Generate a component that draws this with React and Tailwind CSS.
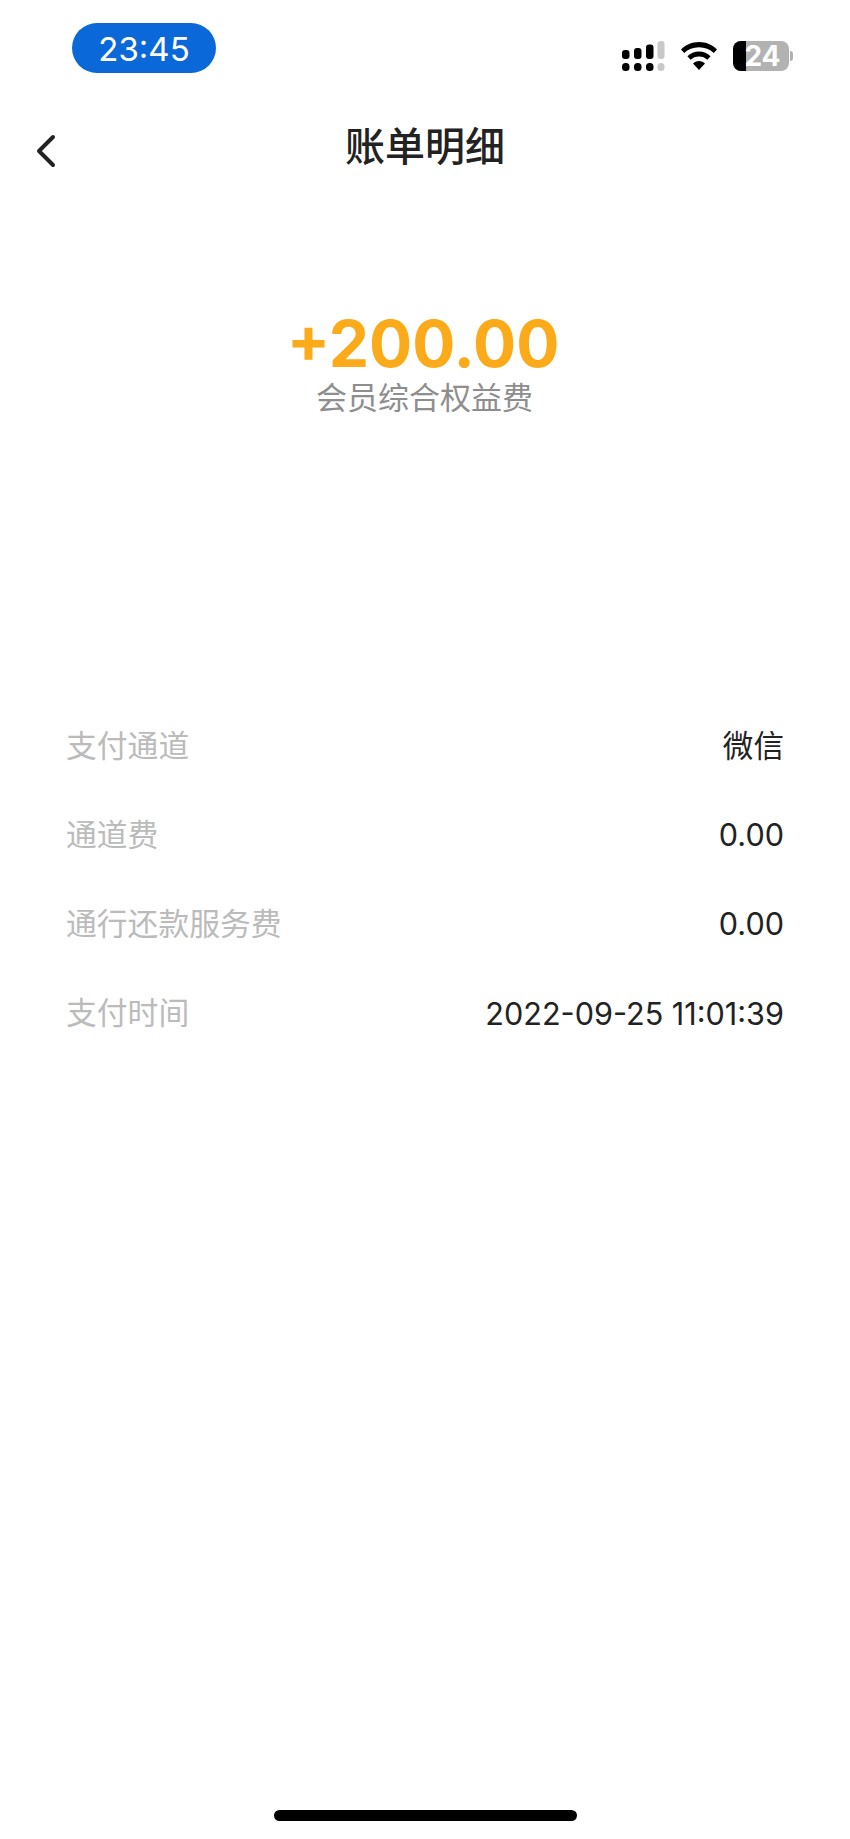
import React from 'react';

const CJK = "font-['Inter','Noto_Sans_CJK_SC',sans-serif]";

const rows = [
  { label: '支付通道', value: '微信' },
  { label: '通道费', value: '0.00' },
  { label: '通行还款服务费', value: '0.00' },
  { label: '支付时间', value: '2022-09-25 11:01:39' },
];

const SignalIcon = () => (
  <svg width="44" height="32" viewBox="0 0 44 32" className="block">
    <rect x="1" y="10" width="7.500" height="9" rx="3" fill="#000" />
    <rect x="13" y="8" width="7.500" height="11" rx="3" fill="#000" />
    <rect x="25" y="4.500" width="7.500" height="14.500" rx="3" fill="#000" />
    <rect x="36.500" y="1" width="7" height="18" rx="3" fill="#c8c8c8" />
    <rect x="1" y="23" width="7.500" height="8" rx="3.500" fill="#000" />
    <rect x="13" y="23" width="7.500" height="8" rx="3.500" fill="#000" />
    <rect x="25" y="23" width="7.500" height="8" rx="3.500" fill="#000" />
    <rect x="36.500" y="23" width="7" height="8" rx="3.500" fill="#c8c8c8" />
  </svg>
);

const WifiIcon = () => (
  <svg width="38" height="28" viewBox="0 0 38 28" className="block">
    <path d="M19 0C12 0 5.800 2.700 1 7.500l3.200 3.600C8 7.300 13.200 5.200 19 5.200s11 2.100 14.800 5.900l3.200-3.600C32.200 2.700 26 0 19 0z" fill="#000" />
    <path d="M19 9.500c-4.500 0-8.500 1.700-11.600 4.700l3.200 3.600c2.200-2.100 5.100-3.300 8.400-3.300s6.200 1.200 8.400 3.300l3.200-3.600C27.500 11.200 23.500 9.500 19 9.500z" fill="#000" />
    <path d="M19 19c-2.300 0-4.400.9-6 2.400l6 6.600 6-6.600c-1.600-1.500-3.700-2.400-6-2.400z" fill="#000" />
  </svg>
);

const BatteryIcon = () => (
  <div className="flex items-center gap-[1px]">
    <div className="relative w-[56px] h-[30px] rounded-[8px] bg-[#b2b2b2]">
      <div className="absolute left-0 top-0 h-full w-[13px] rounded-l-[8px] bg-black" />
      <span className="absolute inset-0 flex items-center justify-center pl-[3px] font-['Inter',sans-serif] text-[28px] leading-[30px] font-bold text-white">
        24
      </span>
    </div>
    <div className="w-[3px] h-[10px] rounded-r-full bg-[#b2b2b2]" />
  </div>
);

export default function App() {
  return (
    <div className={`w-[850px] h-[1839px] bg-white flex flex-col ${CJK}`}>
      {/* Status bar */}
      <div className="flex justify-between items-start pl-[72px] pr-[57px] pt-[23px]">
        <div className="w-[144px] h-[50px] rounded-[25px] bg-[#0a68d8] flex items-center justify-center pt-[2px] text-white text-[33px] leading-none">
          23:45
        </div>
        <div className="flex items-center gap-[15px] pt-[17px]">
          <SignalIcon />
          <WifiIcon />
          <BatteryIcon />
        </div>
      </div>

      {/* Nav */}
      <div className="relative flex items-center justify-center h-[60px] mt-[44px]">
        <svg width="22" height="34" viewBox="0 0 22 34" fill="none" className="absolute left-[35px] top-[17px]">
          <path d="M18 3 L4 17 L18 31" stroke="#222" strokeWidth="4" strokeLinecap="round" strokeLinejoin="round" />
        </svg>
        <h1 className="text-[40px] leading-none font-medium text-[#222]">账单明细</h1>
      </div>

      {/* Amount */}
      <div className="flex flex-col items-center mt-[131px]">
        <div className="text-[64px] leading-[72px] font-bold text-[#fbab1a] pr-[4px]">+200.00</div>
        <div className="text-[31px] leading-[40px] text-[#8e8e8e] -mt-[2px] pr-[1px]">会员综合权益费</div>
      </div>

      {/* Details */}
      <div className="flex flex-col gap-[49.300px] px-[66px] mt-[308px]">
        {rows.map((row) => (
          <div key={row.label} className="flex justify-between items-center h-[40px] leading-none">
            <span className="text-[30.800px] text-[#bbbbbb]">{row.label}</span>
            <span className="text-[30.600px] text-[#222]">{row.value}</span>
          </div>
        ))}
      </div>

      {/* Home indicator */}
      <div className="mt-auto mb-[18px] self-center w-[303px] h-[11px] rounded-full bg-black" />
    </div>
  );
}
